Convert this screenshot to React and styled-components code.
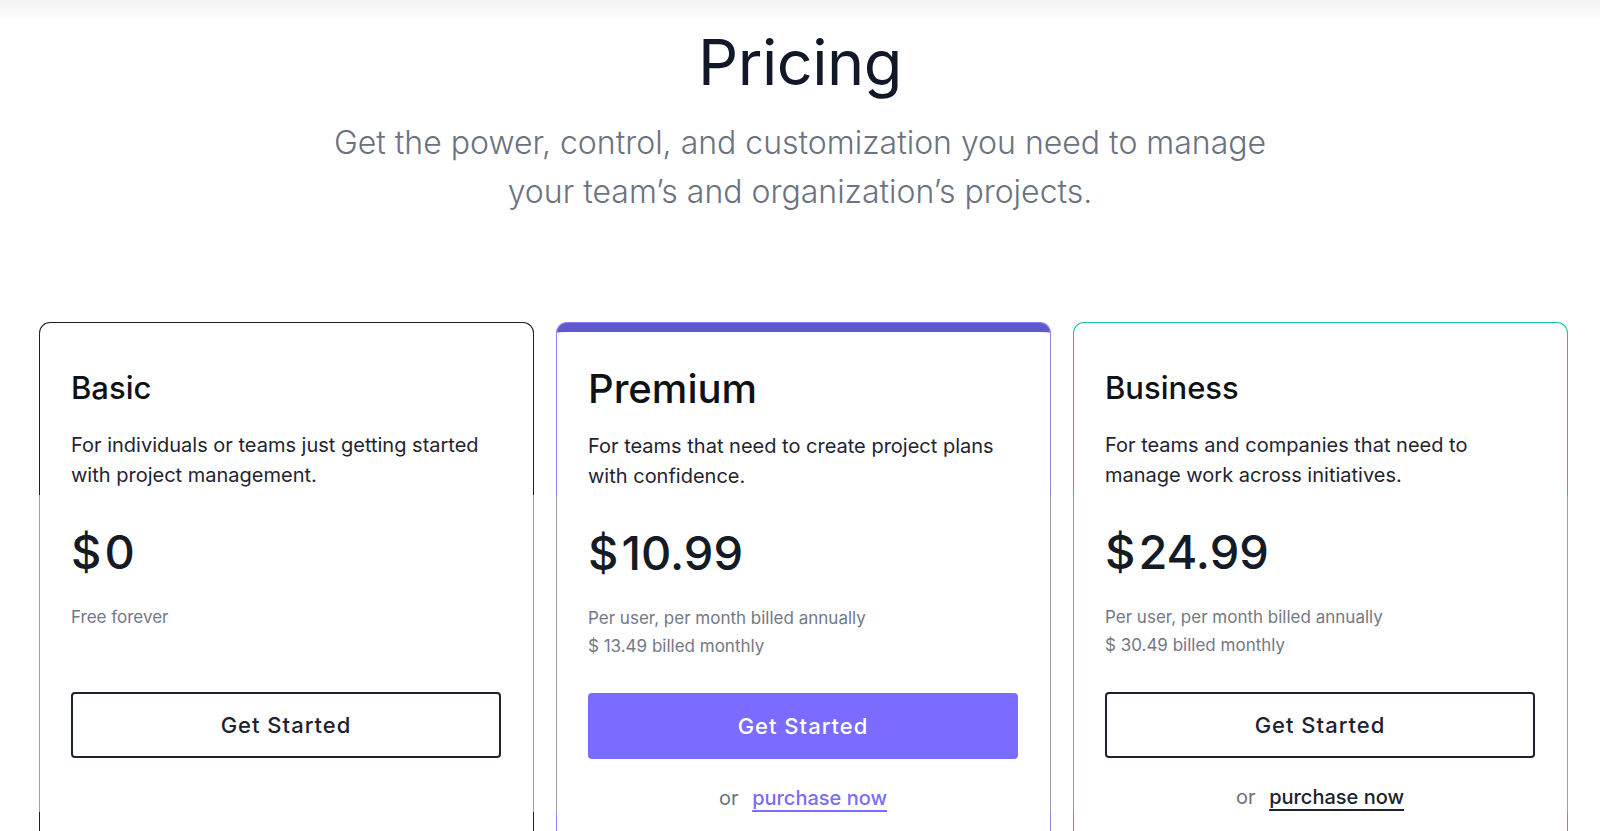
import React from "react";
import styled, { createGlobalStyle } from "styled-components";

const plans = [
  {
    name: "Basic",
    big: false,
    desc: "For individuals or teams just getting started with project management.",
    price: "0",
    notes: ["Free forever"],
    accent: "#1c1f26",
    filled: false,
    purchase: false,
  },
  {
    name: "Premium",
    big: true,
    desc: "For teams that need to create project plans with confidence.",
    price: "10.99",
    notes: ["Per user, per month billed annually", "$ 13.49 billed monthly"],
    accent: "#8d84f2",
    bar: "#5f59cc",
    filled: true,
    purchase: true,
    link: "#7a6cff",
  },
  {
    name: "Business",
    big: false,
    desc: "For teams and companies that need to manage work across initiatives.",
    price: "24.99",
    notes: ["Per user, per month billed annually", "$ 30.49 billed monthly"],
    accent: "#19c3a3",
    filled: false,
    purchase: true,
    link: "#1c2230",
  },
];

function App() {
  return (
    <>
      <GlobalStyle />
      <TopShade />
      <Page>
        <Header>
          <Title>Pricing</Title>
          <Subtitle>
            Get the power, control, and customization you need to manage
            <br />
            your team’s and organization’s projects.
          </Subtitle>
        </Header>
        <Cards>
          {plans.map((plan) => (
            <CardFrame key={plan.name} $accent={plan.accent}>
              <Card $bar={plan.bar}>
                <PlanName $big={plan.big}>{plan.name}</PlanName>
                <Desc>{plan.desc}</Desc>
                <Price>
                  <span>$</span>
                  {plan.price}
                </Price>
                <Notes>
                  {plan.notes.map((n) => (
                    <div key={n}>{n}</div>
                  ))}
                </Notes>
                <Button $filled={plan.filled}>Get Started</Button>
                {plan.purchase && (
                  <Purchase $link={plan.link}>
                    or <a>purchase now</a>
                  </Purchase>
                )}
              </Card>
            </CardFrame>
          ))}
        </Cards>
      </Page>
    </>
  );
}

const GlobalStyle = createGlobalStyle`
  html, body {
    margin: 0;
    padding: 0;
    background: #ffffff;
    overflow: hidden;
  }
  body {
    font-family: Inter, "Noto Sans", sans-serif;
    color: #111827;
  }
`;

const TopShade = styled.div`
  height: 20px;
  background: linear-gradient(to bottom, #f2f2f2, #ffffff);
`;

const Page = styled.div`
  height: 811px;
  overflow: hidden;
`;

const Header = styled.div`
  text-align: center;
`;

const Title = styled.h1`
  margin: 0;
  font-size: 63px;
  font-weight: 400;
  line-height: 84px;
  letter-spacing: -0.5px;
  color: #111827;
`;

const Subtitle = styled.p`
  margin: 14px 0 0;
  font-size: 32px;
  font-weight: 300;
  line-height: 49px;
  color: #6b7280;
`;

const Cards = styled.div`
  display: grid;
  grid-template-columns: repeat(3, 495px);
  gap: 22px;
  margin-top: 106px;
  padding-left: 39px;
`;

const CardFrame = styled.div`
  padding: 1px;
  border-radius: 11px 11px 0 0;
  background: linear-gradient(
    to bottom,
    ${(p) => p.$accent} 0,
    ${(p) => p.$accent} 173px,
    #9aa0a8 173px,
    #9aa0a8 490px,
    ${(p) => p.$accent} 490px
  );
  height: 560px;
`;

const Card = styled.div`
  background: #ffffff;
  border-radius: 10px 10px 0 0;
  height: 100%;
  box-sizing: border-box;
  padding: ${(p) => (p.$bar ? "39px" : "47px")} 32px 0 31px;
  border-top: ${(p) => (p.$bar ? `9px solid ${p.$bar}` : "none")};
`;

const PlanName = styled.h2`
  margin: 0;
  height: 36px;
  line-height: 36px;
  font-size: ${(p) => (p.$big ? "40px" : "31px")};
  font-weight: 500;
  color: #0f1115;
`;

const Desc = styled.p`
  margin: 24px 0 0;
  font-size: 20px;
  line-height: 30px;
  color: #1f2430;
`;

const Price = styled.div`
  margin-top: 34px;
  font-size: 47px;
  font-weight: 500;
  line-height: 56px;
  color: #151b26;
  span {
    margin-right: 3px;
  }
`;

const Notes = styled.div`
  margin-top: 23px;
  height: 56px;
  font-size: 17px;
  line-height: 28px;
  color: #737985;
`;

const Button = styled.button`
  display: block;
  width: 100%;
  height: 66px;
  margin-top: 33px;
  border-radius: 4px;
  border: 2px solid ${(p) => (p.$filled ? "#7a6cff" : "#1c2230")};
  background: ${(p) => (p.$filled ? "#7a6cff" : "#ffffff")};
  color: ${(p) => (p.$filled ? "#ffffff" : "#1c2230")};
  font-family: inherit;
  font-size: 22px;
  font-weight: 500;
  letter-spacing: 1px;
`;

const Purchase = styled.div`
  margin-top: 24px;
  text-align: center;
  font-size: 20px;
  line-height: 30px;
  color: #6b7280;
  a {
    margin-left: 8px;
    font-weight: 500;
    color: ${(p) => p.$link};
    text-decoration: underline;
    text-decoration-thickness: 2px;
    text-underline-offset: 5px;
  }
`;

export default App;
